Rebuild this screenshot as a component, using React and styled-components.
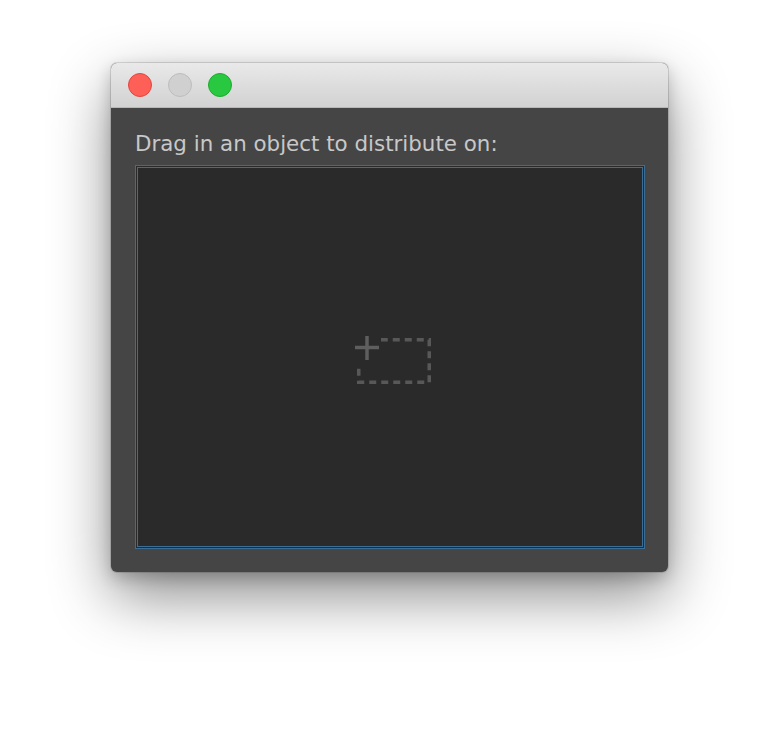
import React from "react";
import styled, { createGlobalStyle } from "styled-components";

const GlobalStyle = createGlobalStyle`
  html, body {
    margin: 0;
    padding: 0;
    background: #ffffff;
  }
  body {
    font-family: "DejaVu Sans", "Liberation Sans", sans-serif;
  }
`;

const Page = styled.div`
  width: 780px;
  height: 732px;
  padding: 63px 0 0 111px;
  box-sizing: border-box;
`;

const Window = styled.div`
  width: 557px;
  height: 509px;
  border-radius: 6px;
  overflow: hidden;
  background: #454545;
  box-shadow: 0 0 0 1px rgba(0, 0, 0, 0.12), 0 24px 60px rgba(0, 0, 0, 0.45),
    0 6px 16px rgba(0, 0, 0, 0.2);
  display: flex;
  flex-direction: column;
`;

const TitleBar = styled.div`
  height: 44px;
  flex-shrink: 0;
  background: linear-gradient(#e9e9e9, #d2d2d2);
  border-bottom: 1px solid #b8b8b8;
  display: flex;
  align-items: center;
  gap: 16px;
  padding-left: 17px;
`;

const Light = styled.div`
  width: 24px;
  height: 24px;
  border-radius: 50%;
  box-sizing: border-box;
  background: ${(p) => p.$fill};
  border: 1px solid ${(p) => p.$edge};
`;

const Body = styled.div`
  flex: 1;
  display: flex;
  flex-direction: column;
  padding: 24px 23px 23px 24px;
`;

const Label = styled.div`
  color: #c8c8c8;
  font-size: 21.4px;
  line-height: 24px;
  margin-bottom: 9px;
`;

const DropZone = styled.div`
  flex: 1;
  border: 3px double #3b6d95;
  background: #2a2a2a;
  display: flex;
  align-items: center;
  justify-content: center;
`;

const IconSvg = styled.svg`
  margin: 5px 0 0 5px;
`;

const AddIcon = () => (
  <IconSvg width="76" height="48" viewBox="0 0 76 48">
    <rect
      x="3.75"
      y="3.75"
      width="70.5"
      height="42.5"
      fill="none"
      stroke="#585858"
      strokeWidth="3.5"
      strokeDasharray="7 5"
      strokeDashoffset="-22"
    />
    <rect x="0" y="0" width="26" height="28" fill="#2a2a2a" />
    <path d="M12 0 V24 M0 11.5 H24" stroke="#5e5e5e" strokeWidth="3.5" />
  </IconSvg>
);

export default function App() {
  return (
    <>
      <GlobalStyle />
      <Page>
        <Window>
          <TitleBar>
            <Light $fill="#fe5f57" $edge="#e2463f" />
            <Light $fill="#d0d0d0" $edge="#bdbdbd" />
            <Light $fill="#28c840" $edge="#1eab31" />
          </TitleBar>
          <Body>
            <Label>Drag in an object to distribute on:</Label>
            <DropZone>
              <AddIcon />
            </DropZone>
          </Body>
        </Window>
      </Page>
    </>
  );
}
